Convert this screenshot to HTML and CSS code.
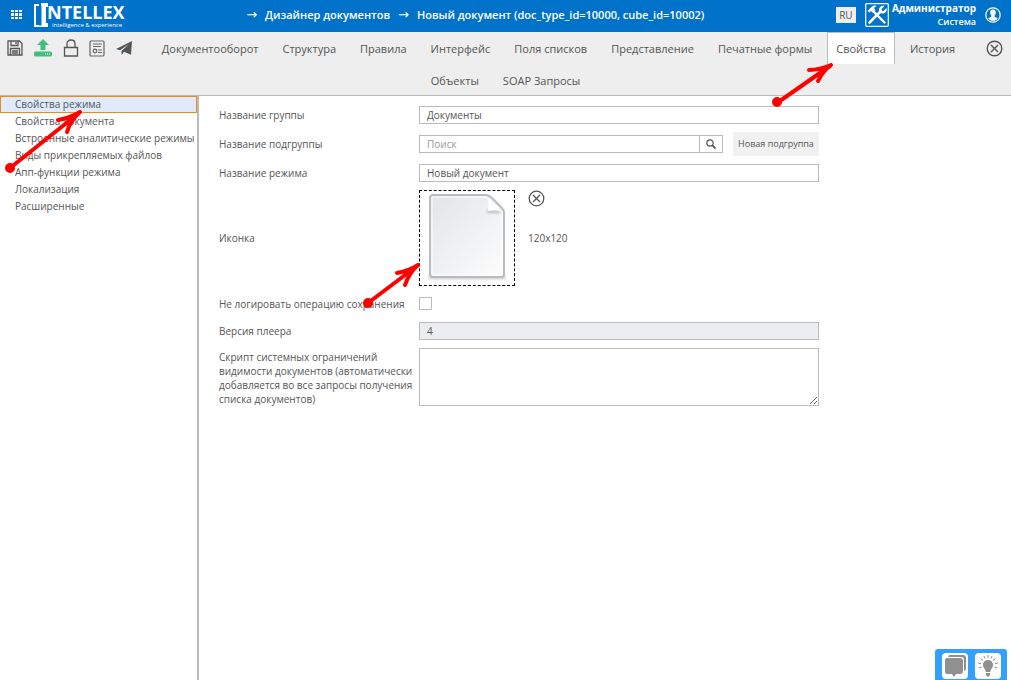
FILE: index.html
```html
<!DOCTYPE html>
<html lang="ru">
<head>
<meta charset="utf-8">
<title>Дизайнер документов</title>
<link rel="stylesheet" href="styles.css">
</head>
<body>
<header class="topbar">
  <button class="icon-btn apps" aria-label="Меню">
    <svg width="12" height="10" viewBox="0 0 12 10" fill="#fff"><path d="M0 0h3v2H0zM4 0h3v2H4zM8 0h3v2H8zM0 3h3v3H0zM4 3h3v3H4zM8 3h3v3H8zM0 7h3v2H0zM4 7h3v2H4zM8 7h3v2H8z"/></svg>
  </button>
  <a class="logo" href="#">
    <svg width="15" height="25" viewBox="0 0 15 25" fill="#fff"><path d="M0 1h5v2H2v19h3v2H0zM7 0h7v4h-2v16h2v4H4v-1.500h3.500V3H7z"/></svg>
    <span class="logo-text"><span class="logo-name">NTELLEX</span><span class="logo-tag">intelligence &amp; experience</span></span>
  </a>
  <nav class="crumbs">
    <span class="arrow">→</span><a href="#">Дизайнер документов</a>
    <span class="arrow">→</span><a href="#">Новый документ (doc_type_id=10000, cube_id=10002)</a>
  </nav>
  <div class="account">
    <button class="lang">RU</button>
    <button class="icon-btn" aria-label="Инструменты">
      <svg width="24" height="24" viewBox="0 0 24 24" fill="none" stroke="#fff"><rect x=".7" y=".7" width="22.6" height="22.6" rx="1" stroke-width="1.200"/><path d="M8.500 8.500l11 11" stroke-width="2.400" stroke-linecap="round"/><path d="M4.500 19.500L16 8" stroke-width="2.600" stroke-linecap="round"/><path d="M19.500 3l-3 3v2h2l3-3c1 3-1 5.500-4 5.500l-2.500-.5-1-3c0-3 2.500-5 5.500-4z" fill="#fff" stroke="none"/><path d="M2.500 8L7 3.500c1.500-1.200 3-1 4.500-.5L9 5l1.500 2.500L8 10 6 8 4.500 9.500z" fill="#fff" stroke="none"/></svg>
    </button>
    <div class="user"><b>Администратор</b><span>Система</span></div>
    <button class="icon-btn" aria-label="Профиль">
      <svg width="16" height="16" viewBox="0 0 16 16"><circle cx="8" cy="8" r="7.200" fill="none" stroke="#fff" stroke-width="1.200"/><path d="M8 2.500c2 0 3 1.500 2.800 3.500-.1 1.200-.6 2-1.100 2.600v1.100l3 1.500C11.600 13 10 13.800 8 13.800S4.400 13 3.300 11.200l3-1.500V8.600C5.800 8 5.300 7.200 5.200 6 5 4 6 2.500 8 2.500z" fill="#fff"/></svg>
    </button>
  </div>
</header>

<div class="toolbar">
  <div class="tools">
    <button class="icon-btn" aria-label="Сохранить"><svg width="16" height="16" viewBox="0 0 16 16" fill="none" stroke="#555" stroke-width="1.300"><path d="M1 1h11.500L15 3.500V15H1zM4 1v4.500h7V1M9 2v2M3.500 15V8.500h9V15M5 11h6M5 13h6"/></svg></button>
    <button class="icon-btn" aria-label="Выгрузить"><svg width="18" height="18" viewBox="0 0 18 18"><path d="M9 0l6 6h-3.500v5h-5V6H3z" fill="#42be7e"/><rect x="0" y="12.500" width="18" height="5" rx="1.500" fill="#42be7e"/><path d="M11 15h1M13 15h1M15 15h1" stroke="#fff" stroke-width="1.200"/></svg></button>
    <button class="icon-btn" aria-label="Заблокировать"><svg width="16" height="18" viewBox="0 0 16 18" fill="none" stroke="#555" stroke-width="1.300"><path d="M1.500 8.500h13v8.500h-13zM4 8.500V4.500C4 2.200 5.600 1 8 1s4 1.200 4 3.500v4"/></svg></button>
    <button class="icon-btn" aria-label="Отчёт"><svg width="16" height="17" viewBox="0 0 16 17" fill="none" stroke="#666" stroke-width="1.200"><rect x="1" y="1" width="14" height="15" rx="1"/><path d="M4 4h9M4 6.500h8M9 10h4M9 12.500h4"/><circle cx="6" cy="11" r="1.800"/></svg></button>
    <button class="icon-btn" aria-label="Отправить"><svg width="16" height="14" viewBox="0 0 16 14" fill="#50555a"><path d="M16 0L0 8l4 1.300L13 3 5.500 10v4L8 10.700l7 3z"/></svg></button>
  </div>
  <button class="icon-btn close" aria-label="Закрыть"><svg width="17" height="17" viewBox="0 0 17 17" fill="none" stroke="#555" stroke-width="1.400"><circle cx="8.500" cy="8.500" r="7.300"/><path d="M5 5l7 7M12 5l-7 7"/></svg></button>
  <nav class="tabs">
    <a href="#">Документооборот</a>
    <a href="#">Структура</a>
    <a href="#">Правила</a>
    <a href="#">Интерфейс</a>
    <a href="#">Поля списков</a>
    <a href="#">Представление</a>
    <a href="#">Печатные формы</a>
    <a href="#" class="active">Свойства</a>
    <a href="#">История</a>
    <a href="#">Объекты</a>
    <a href="#">SOAP Запросы</a>
  </nav>
</div>

<div class="body">
  <nav class="side">
    <a href="#" class="selected">Свойства режима</a>
    <a href="#">Свойства документа</a>
    <a href="#">Встроенные аналитические режимы</a>
    <a href="#">Виды прикрепляемых файлов</a>
    <a href="#">Апп-функции режима</a>
    <a href="#">Локализация</a>
    <a href="#">Расширенные</a>
  </nav>
  <form class="form">
    <label for="group">Название группы</label>
    <input id="group" class="field" type="text" value="Документы">

    <label for="subgroup">Название подгруппы</label>
    <div class="search-row">
      <input id="subgroup" class="field" type="text" placeholder="Поиск">
      <button type="button" class="search-btn" aria-label="Найти"><svg width="10" height="10" viewBox="0 0 10 10" fill="none" stroke="#555"><circle cx="4" cy="4" r="3.200" stroke-width="1.200"/><path d="M6.300 6.300L9.500 9.500" stroke-width="1.700"/></svg></button>
      <button type="button" class="new-btn">Новая подгруппа</button>
    </div>

    <label for="mode">Название режима</label>
    <input id="mode" class="field" type="text" value="Новый документ">

    <span>Иконка</span>
    <div class="icon-row">
      <div class="thumb">
        <svg width="94" height="94" viewBox="0 0 94 94">
          <defs><linearGradient id="paper" x1="0" y1="0" x2="1" y2="1"><stop offset="0" stop-color="#e2e4e8"/><stop offset="1" stop-color="#fdfdfd"/></linearGradient><filter id="soft" x="-10%" y="-50%" width="120%" height="200%"><feGaussianBlur stdDeviation="1.500"/></filter></defs>
          <path d="M9 84h76v4H9z" fill="#aaa" opacity=".7" filter="url(#soft)"/>
          <path d="M13 4h53c3 0 5 2 7 4l8 8c2 2 3 3 3 6v61q0 3-3 3H13q-3 0-3-3V7q0-3 3-3z" fill="url(#paper)" stroke="#b8bcc1" stroke-width="2"/>
          <path d="M12 83V6h55M82 20v64H12" fill="none" stroke="#fff" stroke-width="1"/>
          <path d="M67 19h13v3H67z" fill="#bbb" filter="url(#soft)"/><path d="M67 6c2 5 2 8 1 14 5-1 10-1 14 1z" fill="#fff"/>
        </svg>
      </div>
      <div class="thumb-info">
        <button type="button" class="icon-btn" aria-label="Удалить иконку"><svg width="17" height="17" viewBox="0 0 17 17" fill="none" stroke="#555" stroke-width="1.300"><circle cx="8.500" cy="8.500" r="7.300"/><path d="M5 5l7 7M12 5l-7 7"/></svg></button>
        <span>120x120</span>
      </div>
    </div>

    <label for="nolog">Не логировать операцию сохранения</label>
    <input id="nolog" class="check" type="checkbox">

    <label for="player">Версия плеера</label>
    <input id="player" class="field locked" type="text" value="4" readonly>

    <label class="script-label" for="script">Скрипт системных ограничений видимости документов (автоматически добавляется во все запросы получения списка документов)</label>
    <textarea id="script" class="area"></textarea>
  </form>
</div>

<div class="helper">
  <button aria-label="Чат"><svg width="21" height="22" viewBox="0 0 21 22" fill="#909090"><path d="M5 0h13q3 0 3 3v10q0 3-2 3V5q0-3-3-3H3q0-2 2-2z"/><path d="M2 3h13q3 0 3 3v10q0 3-3 3h-4l-2 3-2-3H2q-2 0-2-3V6q0-3 2-3z"/></svg></button>
  <button aria-label="Подсказки"><svg width="20" height="22" viewBox="0 0 20 22" fill="#909090"><path d="M10 5c3.300 0 5 2.200 5 5 0 3-2.500 4-2.800 7H7.800C7.500 14 5 13 5 10c0-2.800 1.700-5 5-5zM7.800 18h4.400v2L10 22l-2.200-2z"/><path d="M10 0v3M6 1l1 2.500M14 1l-1 2.500M2.500 3.500L5 5.500M17.500 3.500L15 5.500M0 8l3 .7M20 8l-3 .7M1 13l2.500-1M19 13l-2.500-1" stroke="#909090"/></svg></button>
</div>

<svg class="marks" width="840" height="310" viewBox="0 0 840 310" fill="none" stroke="#f00" stroke-width="4" stroke-linecap="round">
  <path d="M777 103L830 66M809 70Q820 70 831 65M818 81Q823 71 831 65"/><circle cx="777" cy="102" r="3"/>
  <path d="M10 168L79 113M58 120Q70 118 80 112M67 132Q70 121 80 112"/><circle cx="10" cy="168" r="3"/>
  <path d="M368 303L417 266M397 273Q409 271 418 265M405 285Q409 273 418 265"/><circle cx="368" cy="303" r="3"/>
</svg>
</body>
</html>
```
FILE: styles.css
```css
* { box-sizing: border-box; }
body { margin: 0; min-height: 100vh; display: flex; flex-direction: column; font: 10px/14px "Open Sans", sans-serif; color: #555; background: #fff; }
a { color: inherit; text-decoration: none; }
button, input, textarea { font: inherit; color: inherit; margin: 0; }
svg { display: block; }
.icon-btn { border: 0; padding: 0; background: none; display: flex; }

.topbar { display: flex; align-items: center; height: 32px; padding: 0 10px 2px 11px; background: #0072c9; color: #fff; }
.logo { display: flex; align-items: center; margin-left: 11px; }
.logo-text { display: flex; flex-direction: column; margin-left: -2px; }
.logo-name { font-size: 18px; line-height: 20px; font-weight: 700; }
.logo-tag { font-size: 6px; line-height: 6px; padding-left: 5px; }
.crumbs { flex: 1; display: flex; justify-content: center; gap: 8px; padding-right: 10px; font-size: 11px; font-weight: 600; white-space: nowrap; }
.arrow { font-family: "DejaVu Sans", sans-serif; font-size: 13px; font-weight: 400; }
.account { display: flex; align-items: center; }
.lang { border: 0; padding: 0; width: 20px; height: 16px; margin-right: 9px; background: #eee; color: #555; }
.user { display: flex; flex-direction: column; align-items: flex-end; margin: 0 9px 0 3px; line-height: 13px; font-size: 9px; font-weight: 600; }
.user b { font-size: 10px; font-weight: 700; }

.toolbar { background: #eee; border-bottom: 1px solid #bbb; }
.tools { float: left; display: flex; align-items: center; justify-content: space-between; width: 140px; height: 32px; padding: 0 8px 0 7px; }
.close { float: right; align-items: center; justify-content: center; width: 34px; height: 32px; }
.tabs { text-align: center; font-size: 0; margin-bottom: -1px; }
.tabs a { display: inline-block; height: 32px; margin: 0 3px; padding: 0 8px; border: 1px solid transparent; border-bottom: 0; font-size: 11px; line-height: 32px; vertical-align: top; }
.tabs .active { background: #fff; border-color: #bbb; }

.body { flex: 1; display: flex; }
.side { width: 199px; border-right: 2px solid #bbb; flex: none; display: flex; flex-direction: column; }
.side a { height: 17px; line-height: 15px; padding: 0 14px; border: 1px solid transparent; white-space: nowrap; }
.side .selected { background: #dfebfd; border-color: #f08a10; }
.form { flex: 1; display: grid; grid-template-columns: 196px minmax(200px, 400px); column-gap: 4px; row-gap: 8px; align-content: start; align-items: center; padding: 10px 20px; }
.field { width: 100%; height: 18px; border: 1px solid #bbb; border-radius: 0; padding: 0 7px; background: #fff; }
.field::placeholder { color: #999; opacity: 1; }
.search-row { display: flex; align-items: center; height: 24px; }
.search-row .field { flex: 1; min-width: 0; }
.search-btn { width: 24px; height: 18px; margin: 0 10px 0 -1px; padding: 0; border: 1px solid #bbb; background: #fff; display: flex; align-items: center; justify-content: center; }
.new-btn { height: 24px; width: 86px; padding: 0; border: 0; background: #f1f1f1; white-space: nowrap; font-size: 9px; }
.icon-row { display: flex; }
.thumb { width: 96px; height: 96px; border: 1px dashed #000; }
.thumb-info { display: flex; flex-direction: column; gap: 24px; margin-left: 13px; }
.check { appearance: none; width: 13px; height: 13px; margin: 3px 0 4px; border: 1px solid #bbb; }
.locked { background: #ebedf0; }
.script-label { align-self: start; padding-top: 2px; }
.area { width: 100%; height: 58px; border: 1px solid #bbb; resize: vertical; display: block; }

.helper { position: fixed; right: 4px; bottom: 0; display: flex; gap: 7px; padding: 4px 6px 1px 7px; background: #33a0fd; border-radius: 3px 3px 0 0; }
.helper button { width: 26px; height: 26px; padding: 0; border: 0; border-radius: 4px; background: #fff; display: flex; align-items: center; justify-content: center; }
.marks { position: absolute; left: 0; top: 0; pointer-events: none; }
```
